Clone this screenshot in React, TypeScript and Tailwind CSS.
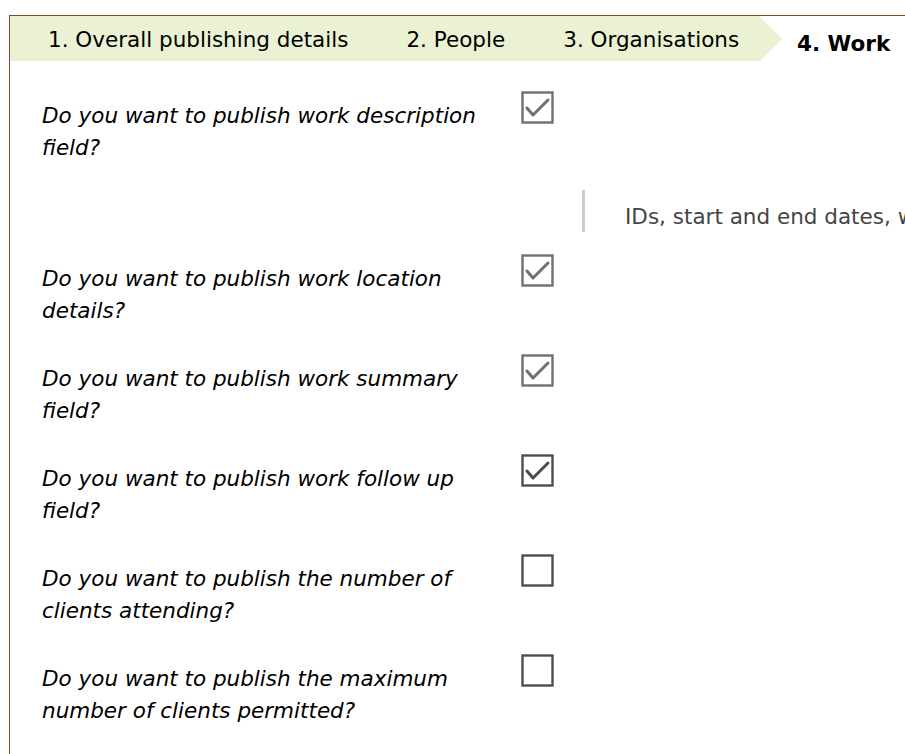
import React from "react";

function Box({ checked, dark }: { checked: boolean; dark?: boolean }) {
  const c = dark ? "#4d4d4d" : "#707070";
  return (
    <svg width="33" height="33" viewBox="0 0 33 33" className="shrink-0">
      <rect x="1.5" y="1.5" width="30" height="30" fill="#fff" stroke={dark || !checked ? "#4d4d4d" : c} strokeWidth="2.4" />
      {checked && (
        <polyline points="6,17 12,24 27,9" fill="none" stroke={c} strokeWidth="3" strokeLinejoin="round" strokeLinecap="round" />
      )}
    </svg>
  );
}

function Row({ text, checked, dark }: { text: string; checked: boolean; dark?: boolean }) {
  return (
    <div className="flex items-start h-[73px]">
      <div className="w-[479px] pt-[9px] pr-[14px] leading-[32px] italic text-[21.5px] text-black">{text}</div>
      <Box checked={checked} dark={dark} />
    </div>
  );
}

export default function App() {
  return (
    <div className="w-[905px] h-[754px] overflow-hidden bg-white pt-[15px] pl-[9px]" style={{ fontFamily: '"DejaVu Sans", Verdana, sans-serif' }}>
      <div className="border-t border-l border-[#7b4a2f] h-[740px] overflow-hidden">
        <div className="flex h-[46px] w-[1000px] items-stretch">
          <div className="flex items-center pt-[4px] h-[45px] bg-[#eaf2d3] w-[750px] text-[21.5px] text-black">
            <span className="ml-[38px] whitespace-nowrap">1. Overall publishing details</span>
            <span className="ml-[58px] whitespace-nowrap">2. People</span>
            <span className="ml-[58px] whitespace-nowrap">3. Organisations</span>
          </div>
          <svg width="24" height="46" viewBox="0 0 24 46" className="shrink-0">
            <polygon points="0,1 0,45 22,23" fill="#eaf2d3" />
          </svg>
          <div className="flex items-center pt-[10px] pl-[13px] text-[21.5px] font-bold text-black whitespace-nowrap">4. Work</div>
        </div>
        <div className="pl-[32px] pt-[29px] flex flex-col">
          <Row text="Do you want to publish work description field?" checked />
          <div className="mt-[26px] ml-[540px] h-[42px] border-l-[3px] border-[#cccccc] pl-[40px] flex items-center pt-[12px] whitespace-nowrap text-[21.5px] text-[#444]">
            IDs, start and end dates, w
          </div>
          <div className="mt-[22px] flex flex-col gap-[27px]">
            <Row text="Do you want to publish work location details?" checked />
            <Row text="Do you want to publish work summary field?" checked />
            <Row text="Do you want to publish work follow up field?" checked dark />
            <Row text="Do you want to publish the number of clients attending?" checked={false} />
            <Row text="Do you want to publish the maximum number of clients permitted?" checked={false} />
          </div>
        </div>
      </div>
    </div>
  );
}
